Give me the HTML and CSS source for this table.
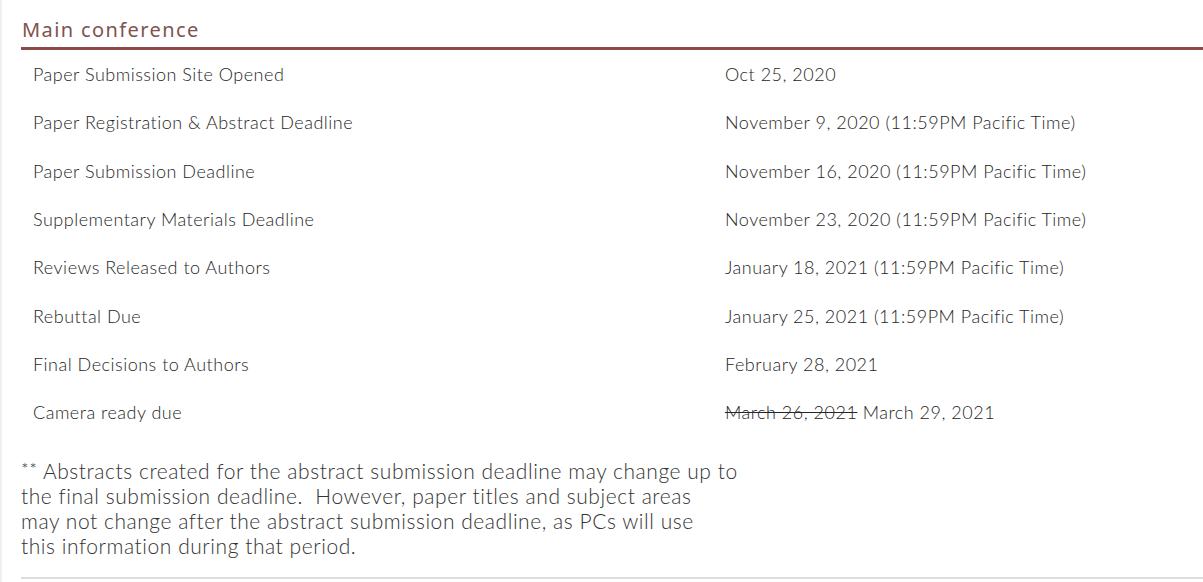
FILE: index.html
```html
<!DOCTYPE html>
<html>
<head>
<meta charset="utf-8">
<link rel="stylesheet" href="styles.css">
</head>
<body>
<div class="page">
  <section class="dates">
    <h2 class="dates-title">Main conference</h2>
    <div class="dates-table">
      <div class="cell label"><span>Paper Submission Site Opened</span></div>
      <div class="cell value"><span>Oct 25, 2020</span></div>
      <div class="cell label"><span>Paper Registration &amp; Abstract Deadline</span></div>
      <div class="cell value"><span>November 9, 2020 (11:59PM Pacific Time)</span></div>
      <div class="cell label"><span>Paper Submission Deadline</span></div>
      <div class="cell value"><span>November 16, 2020 (11:59PM Pacific Time)</span></div>
      <div class="cell label"><span>Supplementary Materials Deadline</span></div>
      <div class="cell value"><span>November 23, 2020 (11:59PM Pacific Time)</span></div>
      <div class="cell label"><span>Reviews Released to Authors</span></div>
      <div class="cell value"><span>January 18, 2021 (11:59PM Pacific Time)</span></div>
      <div class="cell label"><span>Rebuttal Due</span></div>
      <div class="cell value"><span>January 25, 2021 (11:59PM Pacific Time)</span></div>
      <div class="cell label"><span>Final Decisions to Authors</span></div>
      <div class="cell value"><span>February 28, 2021</span></div>
      <div class="cell label"><span>Camera ready due</span></div>
      <div class="cell value"><span><s class="old">March 26, 2021</s> March 29, 2021</span></div>
    </div>
    <p class="note"><span class="stars">**</span> Abstracts created for the abstract submission deadline may change up to<br>the final submission deadline.&nbsp; However, paper titles and subject areas<br>may not change after the abstract submission deadline, as PCs will use<br>this information during that period.</p>
    <hr class="rule">
  </section>
</div>
</body>
</html>
```
FILE: styles.css
```css
html, body {
  margin: 0;
  padding: 0;
  background: #fff;
}
.page {
  border-left: 2px solid #f0f0f0;
  min-height: 582px;
  box-sizing: border-box;
  padding-left: 19px;
  overflow: hidden;
}
.dates {
  width: 1300px;
}
.dates-title {
  margin: 0;
  padding-top: 17px;
  height: 50px;
  box-sizing: border-box;
  font-family: "Noto Sans", sans-serif;
  font-weight: 400;
  font-size: 20px;
  line-height: 26px;
  color: #7e534f;
  letter-spacing: 1.4px;
  border-bottom: 3px solid #8c4a47;
  padding-left: 1px;
}
.dates-table {
  display: grid;
  grid-template-columns: 692px 1fr;
  grid-auto-rows: 48.3px;
  font-family: "Lato", sans-serif;
  font-weight: 300;
  font-size: 18px;
  letter-spacing: 0.5px;
  color: #262626;
}
.cell {
  display: flex;
  align-items: center;
  padding-left: 12px;
}
.old {
  text-decoration: line-through;
}
.note {
  margin: 21px 0 0 0;
  font-family: "Lato", sans-serif;
  font-weight: 300;
  font-size: 21px;
  line-height: 25px;
  letter-spacing: 0.55px;
  color: #333;
}
.stars {
  font-size: 18px;
  vertical-align: 3px;
}
.rule {
  margin: 19px 0 0 0;
  border: 0;
  border-top: 2px solid #ddd;
  width: 1182px;
}
```
